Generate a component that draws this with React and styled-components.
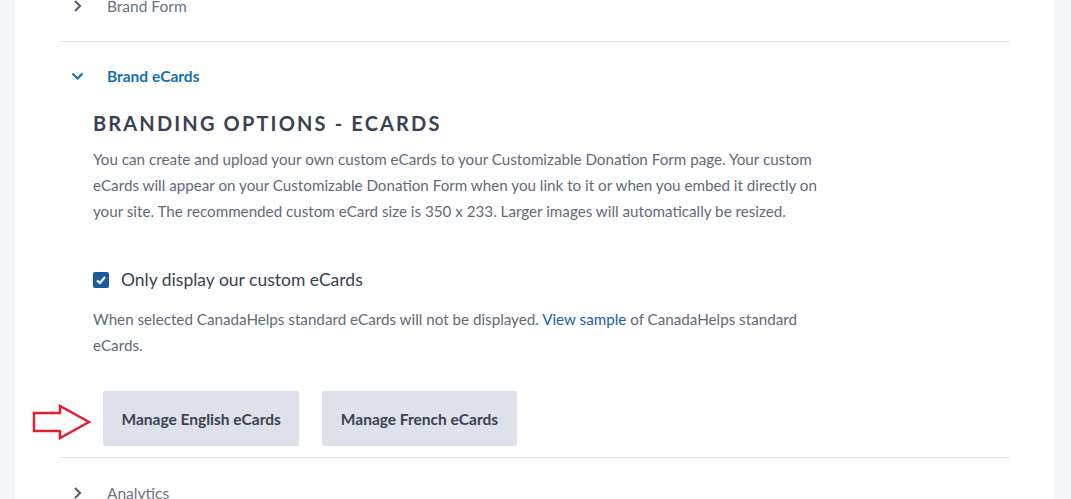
import React from "react";
import styled, { createGlobalStyle } from "styled-components";

const GlobalStyle = createGlobalStyle`
  body {
    margin: 0;
    background: #f5f6f8;
    font-family: Lato, "Open Sans", sans-serif;
    overflow: hidden;
  }
`;

const Page = styled.div`
  display: flex;
  height: 499px;
  padding: 0 17px 0 15px;
`;

const Panel = styled.main`
  flex: 1;
  background: #ffffff;
  padding: 0 44px;
  overflow: hidden;
`;

const List = styled.div`
  margin-top: -29px;
`;

const Item = styled.section`
  border-bottom: ${(p) => (p.last ? "none" : "1px solid #e2e3e9")};
`;

const Header = styled.div`
  display: flex;
  align-items: center;
  height: ${(p) => (p.open ? "68px" : "70px")};
  padding-left: 12px;
  gap: 23px;
  font-size: 15.5px;
  font-weight: ${(p) => (p.open ? 700 : 400)};
  color: ${(p) => (p.open ? "#1570b0" : "#6b7280")};
`;

const Chevron = ({ open }) => (
  <svg width="13" height="14" viewBox="0 0 13 14">
    <polyline
      points={open ? "1.5,4.5 6.5,9.5 11.5,4.5" : "4,2 9,7 4,12"}
      fill="none"
      stroke={open ? "#1570b0" : "#5c6370"}
      strokeWidth="2.2"
    />
  </svg>
);

const Body = styled.div`
  padding: 0 0 11px 34px;
`;

const Title = styled.h2`
  margin: 1px 0 0;
  font-size: 20px;
  line-height: 24px;
  font-weight: 700;
  letter-spacing: 2.15px;
  color: #3a4252;
`;

const Text = styled.p`
  margin: ${(p) => p.margin || "0"};
  max-width: 735px;
  font-size: 15.2px;
  line-height: 26px;
  color: #626a78;
`;

const Link = styled.a`
  color: #1c5ea8;
  text-decoration: none;
`;

const CheckRow = styled.label`
  display: flex;
  align-items: center;
  gap: 12px;
  margin-top: 43px;
  font-size: 17.5px;
  line-height: 26px;
  color: #3a4252;
`;

const Box = styled.span`
  width: 16px;
  height: 16px;
  border-radius: 2px;
  background: #1a5b9e;
  display: flex;
  align-items: center;
  justify-content: center;
`;

const Buttons = styled.div`
  position: relative;
  display: flex;
  gap: 23px;
  margin: 33px 0 0 10px;
`;

const Button = styled.button`
  height: 55px;
  padding: 0 18.5px;
  border: none;
  border-radius: 2px;
  background: #dee1ea;
  font-family: Lato, sans-serif;
  font-size: 15.5px;
  font-weight: 700;
  color: #3a4252;
`;

const Arrow = styled.svg`
  position: absolute;
  left: -71px;
  top: 13px;
`;

export default function App() {
  return (
    <>
      <GlobalStyle />
      <Page>
        <Panel>
          <List>
            <Item>
              <Header>
                <Chevron />
                Brand Form
              </Header>
            </Item>
            <Item>
              <Header open>
                <Chevron open />
                Brand eCards
              </Header>
              <Body>
                <Title>BRANDING OPTIONS - ECARDS</Title>
                <Text margin="11px 0 0">
                  You can create and upload your own custom eCards to your
                  Customizable Donation Form page. Your custom eCards will
                  appear on your Customizable Donation Form when you link to it
                  or when you embed it directly on your site. The recommended
                  custom eCard size is 350 x 233. Larger images will
                  automatically be resized.
                </Text>
                <CheckRow>
                  <Box>
                    <svg width="12" height="12" viewBox="0 0 12 12">
                      <polyline
                        points="2,6.5 4.8,9 10,3"
                        fill="none"
                        stroke="#fff"
                        strokeWidth="2.2"
                      />
                    </svg>
                  </Box>
                  Only display our custom eCards
                </CheckRow>
                <Text margin="13px 0 0">
                  When selected CanadaHelps standard eCards will not be
                  displayed. <Link href="#">View sample</Link> of CanadaHelps
                  standard eCards.
                </Text>
                <Buttons>
                  <Arrow width="60" height="36" viewBox="0 0 60 36">
                    <polygon
                      points="2,9 28,9 28,2 57,18 28,34 28,27 2,27"
                      fill="none"
                      stroke="#e3202a"
                      strokeWidth="2.5"
                    />
                  </Arrow>
                  <Button>Manage English eCards</Button>
                  <Button>Manage French eCards</Button>
                </Buttons>
              </Body>
            </Item>
            <Item last>
              <Header>
                <Chevron />
                Analytics
              </Header>
            </Item>
          </List>
        </Panel>
      </Page>
    </>
  );
}
